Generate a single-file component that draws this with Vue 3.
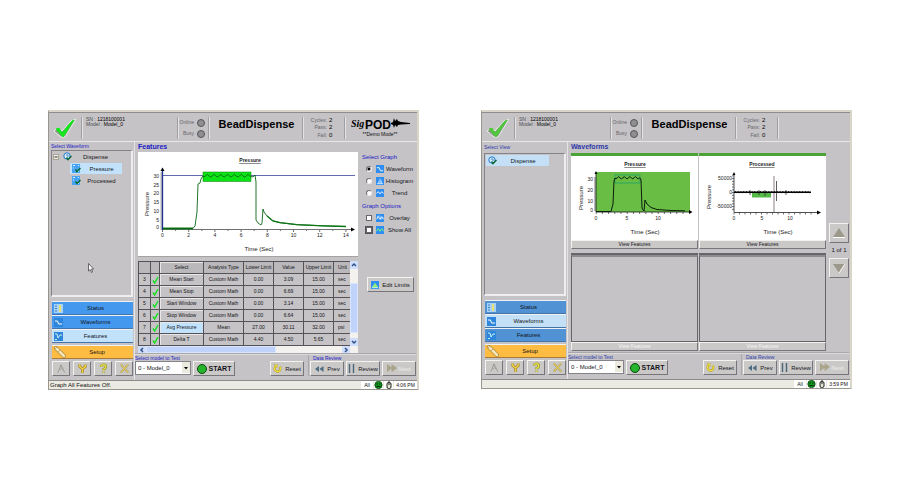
<script setup>
import { ref } from 'vue'

const screens = [
  {
    id: 'features',
    treeLabel: 'Select Waveform',
    tree: [
      { text: 'Dispense', root: true, expander: true },
      { text: 'Pressure', selected: true },
      { text: 'Processed' },
    ],
    heading: 'Features',
    active: 'Features',
    logo: true,
    message: 'Graph All Features Off.',
    time: '4:06 PM',
  },
  {
    id: 'waveforms',
    treeLabel: 'Select View',
    tree: [{ text: 'Dispense', root: true, selected: true }],
    heading: 'Waveforms',
    active: 'Waveforms',
    logo: false,
    message: '',
    time: '3:59 PM',
  },
]

const nav = ['Status', 'Waveforms', 'Features']
const counts = [['Cycles:', 2], ['Pass:', 2], ['Fail:', 0]]
const graphs = ['Waveform', 'Histogram', 'Trend']
const graph = ref('Waveform')
const overlays = ['Overlay', 'Show All']
const tools = ['Alarm', 'Wrench', 'Help', 'Close']

const rows = [
  [3, 'Mean Start', 'Custom Math', '0.00', '3.09', '15.00', 'sec'],
  [4, 'Mean Stop', 'Custom Math', '0.00', '6.69', '15.00', 'sec'],
  [5, 'Start Window', 'Custom Math', '0.00', '3.14', '15.00', 'sec'],
  [6, 'Stop Window', 'Custom Math', '0.00', '6.64', '15.00', 'sec'],
  [7, 'Avg Pressure', 'Mean', '27.00', '30.11', '32.00', 'psi'],
  [8, 'Delta T', 'Custom Math', '4.40', '4.50', '5.65', 'sec'],
]

const yTicks = [[30, 23.5], [25, 32.5], [20, 41], [15, 50], [10, 58.5], [5, 68], [0, 75]]
const xTicks = [0, 2, 4, 6, 8, 10, 12, 14]

function wavy(from, to, step, mid, amp) {
  const pts = []
  let i = 0
  for (let x = from; x <= to; x += step, i++) {
    pts.push(`${x.toFixed(1)},${(mid + amp * [0.6, -0.2, -1, 0.1][i % 4]).toFixed(1)}`)
  }
  return pts.join(' ')
}
const curve = `25,76.5 55,76.5 57,74 59,60 60,32 62,31 63,27 65,24 ${wavy(66, 113, 1.7, 24, 1.7)} 115,25 117,23 118,30 118,68 120,71 123,73 124,71 125,57 126,60 129,64 135,69 142,70.7 159,72.7 185,73.8 208,74.5`
const miniCurve = `25,55.5 40,55.5 42,48 43,25 44,22 ${wavy(45, 69, 1.4, 22, 1.4)} 70,24 71,52 72,54 73,55 74,44 76,48 80,51.5 86,53.5 100,54.5 114,54.8`
const noise = wavy(35, 112, 0.7, 36.3, 0.8)
</script>

<template>
  <main class="page">
    <section v-for="s in screens" :key="s.id" class="window" :class="s.id">
      <header class="top">
        <div class="cell brand">
          <svg class="tick" viewBox="0 0 24 22">
            <path d="M1 14 L5 11 L9 14 L18 4 L23 2 L12 20 L8 20 Z" class="tick-edge" />
            <path d="M3 12 L6 11 L9 16 L19 4 L21 3 L10 20 Z" class="tick-fill" />
          </svg>
        </div>
        <div class="cell serial">
          <div>SN : <b>1218100001</b></div>
          <div>Model : <b>Model_0</b></div>
        </div>
        <div class="cell leds">
          <div>Online <i class="led"></i></div>
          <div>Busy <i class="led"></i></div>
        </div>
        <h1 class="cell title">BeadDispense</h1>
        <dl class="cell counts">
          <template v-for="c in counts" :key="c[0]">
            <dt>{{ c[0] }}</dt>
            <dd>{{ c[1] }}</dd>
          </template>
        </dl>
        <div class="cell logo">
          <template v-if="s.logo">
            <svg viewBox="0 0 60 15" class="sig">
              <text x="0" y="10" class="sig-script">Sig</text>
              <text x="14" y="12" class="sig-pod">POD</text>
              <path d="M40 6 L42 5 L43 1 L44 4 L46 2 L47 4 L50 5 L59 6 V7 L50 7.5 L47 8 L46 10 L44 8 L43 11 L42 8 L40 7 Z" />
            </svg>
            <span>**Demo Mode**</span>
          </template>
        </div>
      </header>

      <div class="body">
        <aside class="side">
          <div class="label">{{ s.treeLabel }}</div>
          <ul class="tree">
            <li v-for="t in s.tree" :key="t.text" :class="{ root: t.root, child: !t.root, expands: t.expander }">
              <svg v-if="t.expander" class="expander" viewBox="0 0 6 6">
                <rect x=".5" y=".5" width="5" height="5" fill="#f4f2e8" stroke="#a8a496" />
                <path d="M1.5 3H4.5" stroke="#222" />
              </svg>
              <a href="#" class="node" :class="{ selected: t.selected }">
                <svg viewBox="0 0 9 9">
                  <template v-if="t.root">
                    <circle cx="4" cy="4" r="3.2" fill="#d7ebff" stroke="#2277c8" />
                    <path d="M4 2V4H6" fill="none" stroke="#2277c8" stroke-width=".8" />
                  </template>
                  <template v-else>
                    <rect width="8" height="9" fill="#47a4f5" />
                    <path d="M1 1.5H3M6 1.5H7M1 4H2M5 7.5H7" stroke="#d8efff" />
                  </template>
                  <path d="M3.5 5.5 L5 7.500 L8.500 4" fill="none" stroke="#0d6b3a" stroke-width="1.500" />
                </svg>
                <span>{{ t.text }}</span>
              </a>
            </li>
          </ul>
          <nav class="nav">
            <button v-for="n in nav" :key="n" type="button" :class="{ on: n === s.active }">
              <svg viewBox="0 0 9 9">
                <rect width="9" height="9" :fill="n === 'Status' ? '#a6d3f7' : '#2d85dc'" />
                <path v-if="n === 'Status'" d="M1 2H3M1 4.500H3M1 7H3" stroke="#3e7fc0" />
                <path v-if="n === 'Status'" d="M6 1V8" stroke="#e8e070" stroke-width="2" />
                <path v-if="n === 'Waveforms'" d="M1 3H3.500L4.500 6H8" fill="none" stroke="#fff" />
                <path v-if="n === 'Features'" d="M1 2H3L4 6L6 3H8M1 7.500H3" fill="none" stroke="#c9f3f0" />
              </svg>
              <span>{{ n }}</span>
            </button>
            <button type="button" class="setup">
              <svg viewBox="0 0 12 12">
                <path d="M2 2 L10 10" stroke="#b28b3c" stroke-width="4" stroke-linecap="round" />
                <path d="M2 2 L10 10" stroke="#f4e7b8" stroke-width="2.500" stroke-linecap="round" />
                <path d="M1 3 L3 1 M4 6 L6 4" stroke="#a98a4d" stroke-width=".7" />
              </svg>
              <span>Setup</span>
            </button>
          </nav>
          <div class="tools">
            <button v-for="t in tools" :key="t" type="button" :aria-label="t">
              <svg viewBox="0 0 12 12">
                <path v-if="t === 'Alarm'" d="M2 10.500 L5.500 2 L9.500 10.500 M4 8 L6 6 L8 8 M5.500 2 V5" fill="none" stroke="#9a9990" />
                <template v-if="t === 'Wrench'">
                  <path d="M3 1.500V4L6 6.500L9 4V1.500M6 6V11" fill="none" stroke="#9b8428" stroke-width="3" />
                  <path d="M3 1.500V4L6 6.500L9 4V1.500M6 6V11" fill="none" stroke="#f0cf48" stroke-width="1.600" />
                </template>
                <template v-if="t === 'Help'">
                  <path d="M3.500 4Q3.500 2 6 2T8.500 4T6 7V8M6 9.500V11" fill="none" stroke="#8f8b2c" stroke-width="2.800" />
                  <path d="M3.500 4Q3.500 2 6 2T8.500 4T6 7V8M6 9.500V11" fill="none" stroke="#e3e04c" stroke-width="1.600" />
                </template>
                <template v-if="t === 'Close'">
                  <path d="M2 1.500L10 10.500M10 1.500L2 10.500" stroke="#98906a" stroke-width="2.400" />
                  <path d="M2 1.500L10 10.500M10 1.500L2 10.500" stroke="#e8cf62" stroke-width="1.300" />
                </template>
              </svg>
            </button>
          </div>
        </aside>

        <div class="work">
          <h2>{{ s.heading }}</h2>

          <div v-if="s.id === 'features'" class="content split">
            <div class="stack">
              <svg class="plot big" viewBox="0 0 220 104">
                <text x="112" y="10" class="name" text-decoration="underline">Pressure</text>
                <text class="axis-name" transform="translate(11 52) rotate(-90)">Pressure</text>
                <text x="121" y="99" class="axis-name">Time (Sec)</text>
                <path d="M24 77.500H214" class="axis" />
                <path d="M213 75.500L217 77.500L213 79.500Z" />
                <path d="M24.500 18V78" stroke="#20309a" stroke-width="1.300" />
                <path d="M22.500 19L24.500 15.500L26.500 19Z" />
                <path v-for="i in 29" :key="'m' + i" :d="`M22.5 ${19 + i * 2}H24`" class="axis" />
                <g v-for="t in yTicks" :key="t[0]">
                  <text x="21" :y="t[1] + 2" class="tick-y">{{ t[0] }}</text>
                </g>
                <g v-for="t in xTicks" :key="'x' + t">
                  <path :d="`M${24.5 + t * 13.1} 78v2m13.1 -2v1`" class="axis" />
                  <text :x="24.5 + t * 13.1" y="85" class="tick-x">{{ t }}</text>
                </g>
                <path d="M25 23.500H217" stroke="#5058a8" stroke-width=".9" />
                <rect x="65" y="20" width="48" height="9.500" fill="#0be316" stroke="#087d0b" stroke-width=".5" />
                <path d="M25 76.500H55" stroke="#0b7a16" stroke-width="2" />
                <polyline :points="curve" class="trace" />
                <polyline points="129,64 135,69 142,70.7 159,72.7 185,73.8 208,74.500" fill="none" stroke="#0c7516" stroke-width="1.300" />
              </svg>

              <div class="grid-box">
                <table>
                  <colgroup>
                    <col class="c-n" /><col class="c-ok" /><col class="c-sel" /><col class="c-type" />
                    <col class="c-num" /><col class="c-num" /><col class="c-num" /><col />
                  </colgroup>
                  <thead>
                    <tr>
                      <th></th><th></th><th class="raised">Select</th><th>Analysis Type</th>
                      <th>Lower Limit</th><th>Value</th><th>Upper Limit</th><th class="unit">Unit</th>
                    </tr>
                  </thead>
                  <tbody>
                    <tr v-for="r in rows" :key="r[0]">
                      <td>{{ r[0] }}</td>
                      <td>
                        <svg class="ok" viewBox="0 0 7 8"><path d="M1 4.500L2.700 7L6 1" fill="none" stroke="#13e01c" stroke-width="1.400" /></svg>
                      </td>
                      <td class="raised" :class="{ picked: r[0] === 7 }">{{ r[1] }}</td>
                      <td>{{ r[2] }}</td><td>{{ r[3] }}</td><td>{{ r[4] }}</td><td>{{ r[5] }}</td>
                      <td class="unit">{{ r[6] }}</td>
                    </tr>
                  </tbody>
                </table>
                <div class="vbar">
                  <button type="button" aria-label="Scroll up"><svg viewBox="0 0 8 8"><path d="M2 5L4 3L6 5" /></svg></button>
                  <i class="v-thumb"></i>
                  <button type="button" aria-label="Scroll down"><svg viewBox="0 0 8 8"><path d="M2 3L4 5L6 3" /></svg></button>
                </div>
                <div class="hbar">
                  <button type="button" aria-label="Scroll left"><svg viewBox="0 0 8 8"><path d="M5 2L3 4L5 6" /></svg></button>
                  <i class="h-thumb"></i>
                  <button type="button" aria-label="Scroll right"><svg viewBox="0 0 8 8"><path d="M3 2L5 4L3 6" /></svg></button>
                </div>
              </div>
            </div>

            <div class="options">
              <h3>Select Graph</h3>
              <label v-for="g in graphs" :key="g">
                <input v-model="graph" type="radio" name="graph" :value="g" />
                <svg viewBox="0 0 9 9">
                  <rect width="9" height="9" fill="#2d8df0" />
                  <path v-if="g === 'Waveform'" d="M1 3H3.500L5 6.500H8" fill="none" stroke="#fff" />
                  <path v-if="g === 'Histogram'" d="M1 7.500H8M3 7V5M4.500 7V2M6 7V4" stroke="#d9f0ff" />
                  <path v-if="g === 'Trend'" d="M0.500 5L2.500 3L4.500 5.500L6.500 3L8.500 5" fill="none" stroke="#fff" />
                </svg>
                <span>{{ g }}</span>
              </label>
              <h3 class="second">Graph Options</h3>
              <label v-for="o in overlays" :key="o">
                <input type="checkbox" :class="{ focused: o === 'Show All' }" />
                <svg viewBox="0 0 9 9">
                  <rect width="9" height="9" fill="#2d8df0" />
                  <path d="M0.500 6L2.500 3L4.500 6L6.500 3L8.500 6" fill="none" :stroke="o === 'Overlay' ? '#fff' : '#7dfb7a'" />
                  <path v-if="o === 'Overlay'" d="M1 3L4 2L6 6L8 4" fill="none" stroke="#a8d8ff" />
                </svg>
                <span>{{ o }}</span>
              </label>
              <button type="button" class="btn edit">
                <svg viewBox="0 0 9 9">
                  <rect width="9" height="9" fill="#2d8df0" />
                  <path d="M1 7L4.500 2L8 7Z" fill="#8df07a" />
                  <path d="M1 7.500H8" stroke="#e6ffd8" />
                </svg>
                Edit Limits
              </button>
            </div>
          </div>

          <div v-else class="content split pages">
            <div class="cards">
              <article class="card">
                <svg class="plot" viewBox="0 0 127 84">
                  <text x="64" y="10" class="name" text-decoration="underline">Pressure</text>
                  <text class="axis-name" transform="translate(12 42) rotate(-90)">Pressure</text>
                  <text x="74" y="78" class="axis-name">Time (Sec)</text>
                  <rect x="25" y="16" width="94" height="40" fill="#69bd45" />
                  <path d="M25 17V56H119" fill="none" stroke="#111" stroke-width=".8" />
                  <path d="M118 54L121.500 56L118 58ZM23.500 18L25 15L26.500 18Z" />
                  <path v-for="i in 17" :key="i" :d="`M23 ${20 + i * 2}H25`" class="axis" />
                  <path v-for="i in 15" :key="'x' + i" :d="`M${19 + i * 6.2} 56v2`" class="axis" />
                  <text v-for="t in [[30, 22.5], [20, 33.5], [10, 45], [0, 54]]" :key="'y' + t[0]" x="22" :y="t[1] + 2" class="tick-y">{{ t[0] }}</text>
                  <text v-for="t in [0, 5, 10]" :key="'t' + t" :x="25 + t * 6.2" y="64" class="tick-x">{{ t }}</text>
                  <rect x="44" y="19" width="25" height="8" fill="none" stroke="#1fa36b" stroke-width=".8" />
                  <polyline :points="miniCurve" fill="none" stroke="#0a1c08" stroke-width="1" />
                </svg>
                <button type="button" class="view">View Features</button>
              </article>
              <article class="card">
                <svg class="plot" viewBox="0 0 127 84">
                  <text x="63" y="10" class="name" text-decoration="underline">Processed</text>
                  <text class="axis-name" transform="translate(12 41) rotate(-90)">Pressure</text>
                  <text x="79" y="78" class="axis-name">Time (Sec)</text>
                  <path d="M35 18V56.500H119" fill="none" stroke="#222" stroke-width=".8" />
                  <path d="M118 54.500L122 56.500L118 58.500ZM33.500 19L35 16L36.500 19Z" />
                  <path v-for="i in 13" :key="i" :d="`M33 ${17 + i * 2.8}H35`" class="axis" />
                  <path v-for="i in 15" :key="'x' + i" :d="`M${29.5 + i * 5.5} 57v1.5`" class="axis" />
                  <text v-for="t in [['50000', 22], ['0', 36], ['-50000', 50]]" :key="'y' + t[0]" x="33" :y="t[1] + 2" class="tick-y">{{ t[0] }}</text>
                  <text v-for="t in [0, 5, 10]" :key="'t' + t" :x="35 + t * 5.6" y="64" class="tick-x">{{ t }}</text>
                  <rect x="53" y="37" width="19" height="4.500" fill="#55b948" />
                  <path d="M75 20V56" stroke="#8b7f88" />
                  <path d="M77.500 25V45M66 34V40M87 34V39M51 34V39M60 34V39" stroke="#333" stroke-width=".8" />
                  <path d="M35 36.300H112" stroke="#000" stroke-width="1.500" />
                  <polyline :points="noise" fill="none" stroke="#000" stroke-width="1" />
                </svg>
                <button type="button" class="view">View Features</button>
              </article>
              <article v-for="i in 2" :key="i" class="card empty">
                <div class="blank"></div>
                <button type="button" class="view" disabled>View Features</button>
              </article>
            </div>
            <div class="pager">
              <button type="button" class="btn" aria-label="Previous page">
                <svg viewBox="0 0 12 10"><path d="M6 0L12 9H0Z" fill="#9c998a" /><path d="M0 9.500H12" stroke="#fff" /></svg>
              </button>
              <span>1 of 1</span>
              <button type="button" class="btn" aria-label="Next page">
                <svg viewBox="0 0 12 10"><path d="M0 1H12L6 10Z" fill="#9c998a" /><path d="M12 1L6 10" stroke="#fff" /></svg>
              </button>
            </div>
          </div>

          <footer class="actions">
            <div class="group">
              <label class="label" :for="'model-' + s.id">Select model to Test</label>
              <div class="line">
                <span class="picker">
                  <select :id="'model-' + s.id"><option>0 - Model_0</option></select>
                  <svg viewBox="0 0 8 11"><rect width="8" height="11" fill="#eceadf" /><path d="M2 5H6L4 7.500Z" /></svg>
                </span>
                <button type="button" class="btn start"><i></i>START</button>
              </div>
            </div>
            <button type="button" class="btn reset">
              <svg viewBox="0 0 10 10">
                <path d="M3 2.500A3.300 3.300 0 1 0 7.500 3" fill="none" stroke="#a39328" stroke-width="2.400" />
                <path d="M3 2.500A3.300 3.300 0 1 0 7.500 3" fill="none" stroke="#f3e23d" stroke-width="1.400" />
                <path d="M1 .5H5L4.500 4.500Z" fill="#f3e23d" stroke="#a39328" stroke-width=".4" />
              </svg>
              Reset
            </button>
            <div class="group review">
              <span class="label">Data Review</span>
              <div class="line">
                <button type="button" class="btn">
                  <svg viewBox="0 0 10 8"><path d="M5 1V7L1 4ZM9.500 1V7L5.500 4Z" fill="#4e6b80" /></svg>
                  Prev
                </button>
                <button type="button" class="btn">
                  <svg class="slim" viewBox="0 0 7 9"><path d="M1.500 0V9M5.500 0V9" stroke="#486579" stroke-width="1.400" /></svg>
                  Review
                </button>
                <button type="button" class="btn next" disabled>
                  <svg viewBox="0 0 11 9"><path d="M0 0L6 4.500L0 9ZM5 0L11 4.500L5 9Z" fill="#a9a58b" /></svg>
                  Next
                </button>
              </div>
            </div>
          </footer>
        </div>
      </div>

      <div class="status">
        <span class="message">{{ s.message }}</span>
        <span class="chip">All</span>
        <span class="chip">
          <svg viewBox="0 0 9 8">
            <circle cx="4.500" cy="4" r="3.600" fill="#129a1f" stroke="#0a4f10" />
            <path d="M2.500 3H4M5 3H6.500M2.500 5.500H6.500" stroke="#062b08" />
          </svg>
        </span>
        <span class="chip">
          <svg class="slim" viewBox="0 0 6 8">
            <rect x="1" y="1.500" width="4" height="6" rx="1.500" fill="#dfe6cf" stroke="#222" />
            <path d="M3 0V4" stroke="#222" />
          </svg>
        </span>
        <span class="chip time">{{ s.time }}</span>
      </div>
    </section>
    <svg class="pointer" viewBox="0 0 6 10">
      <path d="M.5 .500V8L2.200 6.500L3.500 9.500L4.500 9L3.500 6H5.500Z" fill="#fff" stroke="#333" stroke-width=".7" />
    </svg>
  </main>
</template>

<style>
body {
  background: #fff;
}
</style>

<style scoped>
* {
  box-sizing: border-box;
}

.page {
  position: relative;
  display: grid;
  grid-template-columns: 1fr 1fr;
  gap: 62px;
  align-items: start;
  padding: 110px 48px;
  font-family: 'Liberation Sans', Arial, sans-serif;
  font-size: 6px;
  line-height: 8px;
  color: #141418;
}

.window {
  --blue: #4499ef;
  --lit: #c2e2fb;
  --tick: #14e81c;
  --ink: #2220c4;
  background: #c5c3c6;
  border: 1px solid #98968f;
  border-top: 2px solid #d9d6c9;
  border-right: 2px solid #d9d6c9;
}

.window.waveforms {
  --blue: #5092d4;
  --lit: #c4e0f6;
  --tick: #50c83c;
  --ink: #2f3aaa;
}

button,
select,
input {
  font: inherit;
  color: inherit;
  margin: 0;
  padding: 0;
}

svg {
  display: block;
  flex: none;
}

h1,
h2,
h3,
dl,
dd,
ul {
  margin: 0;
  padding: 0;
  list-style: none;
}

/* Header strip */
.top {
  display: grid;
  grid-template-columns: 33px 96px 31px 1fr 42px 72px;
  height: 30px;
  padding: 4px 0 3px;
  border-top: 1px solid #8f8d8c;
  border-bottom: 1px solid #e9e8e6;
  font-size: 5px;
}

.cell {
  border-right: 1px solid #a09ea2;
  box-shadow: 1px 0 #e4e3e4;
}

.cell.logo {
  border-right: 0;
  box-shadow: none;
}

.tick {
  width: 24px;
  margin-left: 4px;
}

.tick-edge {
  fill: #8d948b;
  stroke: #e8efe6;
}

.tick-fill {
  fill: var(--tick);
  stroke: var(--tick);
}

.serial {
  padding-left: 4px;
  line-height: 7px;
  color: #4c4b50;
}

.serial div:first-child {
  line-height: 4px;
}

.serial b {
  font-weight: 400;
  color: #000;
}

.leds {
  padding-right: 3px;
  line-height: 11px;
  color: #66656a;
}

.leds div {
  display: flex;
  align-items: center;
  justify-content: flex-end;
  gap: 3px;
}

.led {
  width: 8px;
  height: 8px;
  border: 1px solid #55555a;
  border-radius: 50%;
  background: #8f8f92;
}

.title {
  padding-left: 2px;
  font-size: 11px;
  line-height: 14px;
  text-align: center;
  color: #000;
}

.counts {
  display: grid;
  grid-template-columns: 24px 1fr;
  column-gap: 2px;
  line-height: 7px;
  text-align: right;
  color: #66656a;
}

.counts dd {
  text-align: left;
  color: #000;
  font-size: 6px;
}

.logo {
  padding-left: 6px;
}

.logo span {
  display: block;
  width: 58px;
  line-height: 5px;
  text-align: center;
  color: #111;
}

.sig {
  width: 60px;
}

.sig-script {
  font: italic bold 10px 'Liberation Serif', serif;
}

.sig-pod {
  font: bold 12px 'Liberation Sans', sans-serif;
}

/* Main frame */
.body {
  display: grid;
  grid-template-columns: 85px 1fr;
}

.side {
  display: flex;
  flex-direction: column;
  padding: 0 1px 4px 2px;
}

.label {
  font-size: 5px;
  line-height: 6px;
  color: var(--ink);
  white-space: nowrap;
}

.side > .label {
  line-height: 8px;
}

.waveforms .side > .label {
  line-height: 11px;
}

.tree {
  flex: 1;
  display: grid;
  align-content: start;
  gap: 1px;
  margin-bottom: 5px;
  border: 1px solid #858387;
  border-right: 2px solid #efeeee;
  border-bottom: 2px solid #efeeee;
}

.waveforms .tree {
  padding-top: 1px;
}

.tree li {
  display: flex;
  align-items: center;
  height: 11px;
}

.tree .root {
  padding-left: 1px;
}

.tree .expands {
  gap: 2px;
}

.tree .child {
  padding-left: 18px;
}

.expander {
  width: 6px;
}

.node {
  display: flex;
  align-items: center;
  flex: 1;
  height: 11px;
  padding-left: 2px;
  color: inherit;
  text-decoration: none;
}

.node svg {
  width: 9px;
}

.node span {
  flex: 1;
  text-align: center;
}

.root .node {
  margin-right: 15px;
}

.expands .node {
  margin-right: 12px;
}

.child .node {
  margin-right: 9px;
}

.node.selected {
  background: var(--lit);
}

.nav {
  display: grid;
  gap: 1px;
  padding-left: 1px;
}

.nav button {
  display: flex;
  align-items: center;
  height: 13px;
  padding: 0 5px 0 2px;
  background: var(--blue);
  border: 0;
  border-bottom: 1px solid #4474a8;
  box-shadow: 0 -1px #eef2f6;
}

.nav button.on {
  background: var(--lit);
}

.nav svg {
  width: 9px;
}

.nav span {
  flex: 1;
  text-align: center;
}

.nav button.setup {
  margin-top: 2px;
  background: #ffbc42;
  border-bottom-color: #a87c38;
}

.nav .setup svg {
  width: 12px;
}

.tools {
  display: flex;
  justify-content: space-between;
  margin-top: 2px;
  padding-left: 1px;
}

.tools button,
.btn {
  display: flex;
  align-items: center;
  justify-content: center;
  gap: 3px;
  background: #cbc9c8;
  border: 1px solid;
  border-color: #f4f3f0 #77757a #77757a #f4f3f0;
  white-space: nowrap;
}

.tools button {
  width: 18px;
  height: 15px;
}

.tools svg {
  width: 11px;
}

.work {
  display: flex;
  flex-direction: column;
  min-width: 0;
  border-left: 1px solid #e6e5e6;
  padding: 0 1px 4px 0;
}

h2 {
  padding-left: 3px;
  font-size: 7px;
  line-height: 10px;
  color: var(--ink);
}

.content {
  padding-left: 3px;
}

.split {
  display: grid;
  grid-template-columns: 1fr 55px;
  gap: 3px;
}

.stack {
  display: grid;
  gap: 4px;
  align-content: start;
  min-width: 0;
}

.plot {
  width: 100%;
  background: #fff;
}

.big {
  border-bottom: 1px solid #a5a3a0;
}

.plot text {
  fill: #1a1a1a;
}

.plot .name {
  font-size: 5px;
  font-weight: 700;
  text-anchor: middle;
}

.plot .axis-name {
  font-size: 6px;
  text-anchor: middle;
}

.plot .tick-y {
  font-size: 5px;
  text-anchor: end;
}

.plot .tick-x {
  font-size: 5px;
  text-anchor: middle;
}

.axis {
  stroke: #333;
  stroke-width: 0.7;
}

.trace {
  fill: none;
  stroke: #0a6414;
  stroke-width: 0.9;
}

/* Feature table */
.grid-box {
  display: grid;
  grid-template-columns: 1fr 8px;
  overflow: hidden;
}

table {
  width: 100%;
  table-layout: fixed;
  border-collapse: collapse;
  font-size: 5px;
  line-height: 7px;
  text-align: center;
}

.c-n {
  width: 12px;
}

.c-ok {
  width: 9px;
}

.c-sel {
  width: 44px;
}

.c-type {
  width: 40px;
}

.c-num {
  width: 30px;
}

th,
td {
  height: 12px;
  padding: 0;
  border: 1px solid #555358;
  font-weight: 400;
  white-space: nowrap;
  overflow: hidden;
}

th {
  background: #bab8bb;
}

.raised {
  box-shadow: inset 1px 1px #e9e8e8;
}

.picked {
  background: #c2e2fb;
}

.unit {
  padding-left: 4px;
  border-right: 0;
  text-align: left;
}

.ok {
  width: 7px;
  margin: 0 auto;
}

.vbar,
.hbar {
  display: flex;
  background: #f3f2ee;
}

.vbar {
  flex-direction: column;
}

.hbar {
  grid-column: 1 / -1;
  height: 7px;
  padding-right: 8px;
}

.vbar button,
.hbar button {
  width: 8px;
  height: 8px;
  background: #cfdefa;
  border: 0;
}

.hbar button {
  height: 7px;
}

.vbar path,
.hbar path {
  fill: none;
  stroke: #33518c;
  stroke-width: 1.5;
}

.v-thumb,
.h-thumb {
  background: #bfd3fb;
  border: 1px solid #d9e5fd;
}

.v-thumb {
  height: 50px;
  margin: 14px 0 auto;
}

.h-thumb {
  width: 130px;
  margin-right: auto;
}

/* Graph options */
.options h3 {
  margin: 1px 0 2px 1px;
  font-size: 6px;
  font-weight: 400;
  line-height: 8px;
  color: var(--ink);
}

.options h3.second {
  margin-top: 3px;
}

.options label {
  display: flex;
  align-items: center;
  height: 12px;
  padding: 0 1px 0 5px;
}

.options label svg {
  width: 8px;
  margin-left: 4px;
}

.options label span {
  flex: 1;
  text-align: center;
  white-space: nowrap;
}

.options input {
  appearance: none;
  flex: none;
  width: 6px;
  height: 6px;
  background: #fff;
  border: 1px solid #66646a;
}

.options input[type='radio'] {
  border-radius: 50%;
  border-color: #77757a #eee #eee #77757a;
}

.options input[type='radio']:checked {
  background: radial-gradient(#000 0 1px, #fff 2px);
}

.options input.focused {
  outline: 1px solid #55535a;
}

.edit {
  width: 47px;
  height: 13px;
  margin: 41px 0 0 6px;
}

.edit svg {
  width: 8px;
}

/* Waveform cards */
.pages {
  grid-template-columns: 1fr 20px;
  padding-top: 1px;
}

.cards {
  display: grid;
  grid-template-columns: 1fr 1fr;
  gap: 4px 1px;
}

.card {
  display: flex;
  flex-direction: column;
  border-top: 3px solid #4ba336;
}

.view {
  height: 9px;
  font-size: 5px;
  line-height: 7px;
  background: #cbc9c8;
  border: 1px solid;
  border-color: #f2f1ee #77757a #77757a #f2f1ee;
}

.view:disabled {
  color: #f6f5f5;
}

.card.empty {
  border-top: 2px solid #67656a;
}

.blank {
  flex: 1;
  min-height: 87px;
  border: 1px solid #67656a;
  border-top: 2px solid #8d8b8f;
}

.pager {
  display: grid;
  align-content: start;
  padding-top: 70px;
  text-align: center;
}

.pager .btn {
  height: 20px;
}

.pager .btn svg {
  width: 12px;
}

.pager span {
  line-height: 15px;
}

/* Bottom actions */
.actions {
  display: flex;
  align-items: flex-end;
  gap: 4px;
  margin-top: auto;
  padding: 1px 0 0;
  border-top: 1px solid #a9a7aa;
  box-shadow: inset 0 1px #dcdbdc;
}

.waveforms .actions {
  margin-top: 1px;
}

.line {
  display: flex;
  gap: 2px;
}

.group .label {
  display: block;
}

.btn {
  height: 15px;
}

.picker {
  display: grid;
  width: 56px;
  height: 14px;
  background: #fff;
  border: 1px solid #85838a;
}

.picker select,
.picker svg {
  grid-area: 1 / 1;
}

.picker select {
  appearance: none;
  background: none;
  border: 0;
  padding-left: 2px;
}

.picker svg {
  width: 8px;
  justify-self: end;
  pointer-events: none;
}

.start {
  width: 42px;
  font-size: 7px;
  font-weight: 700;
  gap: 2px;
}

.start i {
  width: 10px;
  height: 10px;
  border: 1px solid #0c4a10;
  border-radius: 50%;
  background: #25b52c;
}

.reset {
  width: 34px;
  margin-left: auto;
}

.reset svg {
  width: 9px;
}

.review {
  border-left: 1px solid #a9a7aa;
  padding-left: 1px;
}

.review .label {
  padding-left: 3px;
}

.review .btn {
  width: 34px;
}

.review .btn svg {
  width: 10px;
}

.review .btn svg.slim {
  width: 7px;
}

.next {
  color: #efeeec;
  gap: 1px;
}

/* Status line */
.status {
  display: flex;
  gap: 1px;
  height: 9px;
  background: #ecebe3;
  border-top: 1px solid #8d8b88;
  color: #111;
}

.message {
  flex: 1;
  padding-left: 1px;
}

.chip {
  display: flex;
  align-items: center;
  justify-content: center;
  min-width: 9px;
  background: #fff;
  font-size: 5px;
}

.chip:nth-child(2) {
  min-width: 12px;
}

.chip svg {
  width: 9px;
}

.chip svg.slim {
  width: 6px;
}

.chip.time {
  min-width: 23px;
}

.pointer {
  position: absolute;
  left: 88px;
  top: 263px;
  width: 6px;
}
</style>
